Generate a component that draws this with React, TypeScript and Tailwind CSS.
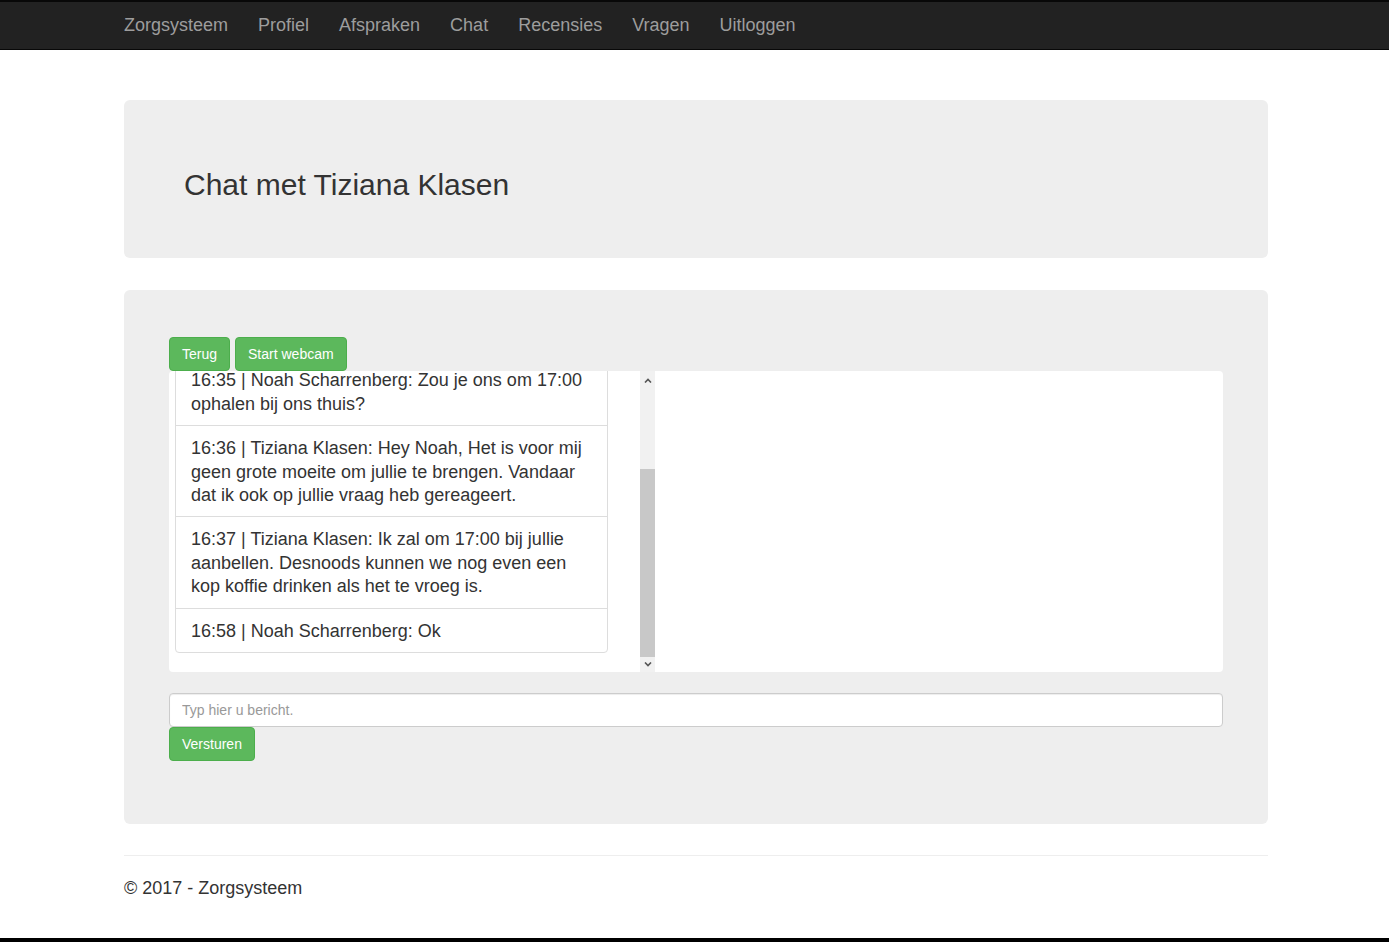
import React from "react";

const messages = [
  "16:35 | Noah Scharrenberg: Zou je ons om 17:00 ophalen bij ons thuis?",
  "16:36 | Tiziana Klasen: Hey Noah, Het is voor mij geen grote moeite om jullie te brengen. Vandaar dat ik ook op jullie vraag heb gereageert.",
  "16:37 | Tiziana Klasen: Ik zal om 17:00 bij jullie aanbellen. Desnoods kunnen we nog even een kop koffie drinken als het te vroeg is.",
  "16:58 | Noah Scharrenberg: Ok",
];

const navLinks = ["Profiel", "Afspraken", "Chat", "Recensies", "Vragen", "Uitloggen"];

function Chevron({ up }: { up?: boolean }) {
  return (
    <svg width="8" height="5" viewBox="0 0 8 5">
      <polyline
        points={up ? "1,4.5 4,1.5 7,4.5" : "1,0.5 4,3.5 7,0.5"}
        fill="none"
        stroke="#555"
        strokeWidth="1.6"
      />
    </svg>
  );
}

export default function App() {
  return (
    <div
      className="min-h-[942px] bg-white text-[#333] flex flex-col"
      style={{ fontFamily: '"Liberation Sans", Arial, sans-serif' }}
    >
      {/* Navbar */}
      <nav className="h-[50px] bg-[#222] border-t-2 border-[#080808] border-b border-b-[#080808]">
        <div className="ml-[124px] flex items-center h-full text-[18px] text-[#9d9d9d]">
          <span className="mr-[15px]">Zorgsysteem</span>
          {navLinks.map((l) => (
            <span key={l} className="px-[15px]">
              {l}
            </span>
          ))}
        </div>
      </nav>

      <main className="ml-[124px] w-[1144px]">
        {/* Header jumbotron */}
        <div className="mt-[50px] h-[158px] bg-[#eee] rounded-[6px] px-[60px] flex items-center">
          <h2 className="text-[30px] leading-[33px] pt-[10px]">Chat met Tiziana Klasen</h2>
        </div>

        {/* Chat jumbotron */}
        <div className="mt-[32px] bg-[#eee] rounded-[6px] px-[45px] pt-[47px] pb-[63px]">
          <div className="flex gap-[5px]">
            <button className="h-[34px] px-[12px] bg-[#5cb85c] border border-[#4cae4c] rounded-[4px] text-white text-[14px]">
              Terug
            </button>
            <button className="h-[34px] px-[12px] bg-[#5cb85c] border border-[#4cae4c] rounded-[4px] text-white text-[14px]">
              Start webcam
            </button>
          </div>

          <div className="h-[301px] bg-white rounded-[4px] flex">
            <div className="w-[471px] h-full overflow-hidden flex flex-col justify-end pl-[6px] pr-[32px]">
              <div className="shrink-0 mb-[19px] border border-[#ddd] rounded-[4px] text-[18px] leading-[23.4px]">
                {messages.map((m, i) => (
                  <div
                    key={i}
                    className={`px-[15px] pt-[11px] pb-[9px] ${i > 0 ? "border-t border-[#ddd]" : ""}`}
                  >
                    {m}
                  </div>
                ))}
              </div>
            </div>
            {/* scrollbar */}
            <div className="w-[15px] h-[301px] bg-[#f1f1f1] flex flex-col">
              <div className="h-[15px] flex items-center justify-center pt-[4px]">
                <Chevron up />
              </div>
              <div className="flex-1 flex flex-col">
                <div className="h-[83px]" />
                <div className="flex-1 bg-[#c8c8c8]" />
              </div>
              <div className="h-[15px] flex items-center justify-center">
                <Chevron />
              </div>
            </div>
            <div className="flex-1" />
          </div>

          <input
            className="mt-[21px] w-full h-[34px] bg-white border border-[#ccc] rounded-[4px] px-[12px] text-[14px] shadow-[inset_0_1px_1px_rgba(0,0,0,0.075)] placeholder:text-[#999] outline-none"
            placeholder="Typ hier u bericht."
          />
          <button className="block h-[34px] px-[12px] bg-[#5cb85c] border border-[#4cae4c] rounded-[4px] text-white text-[14px]">
            Versturen
          </button>
        </div>

        {/* Footer */}
        <hr className="mt-[31px] border-t border-[#eee]" />
        <footer className="h-[82px] pt-[20px] text-[18px] leading-[25px]">
          <p>© 2017 - Zorgsysteem</p>
        </footer>
      </main>

      <div className="h-[5px] bg-black mt-auto" />
    </div>
  );
}
